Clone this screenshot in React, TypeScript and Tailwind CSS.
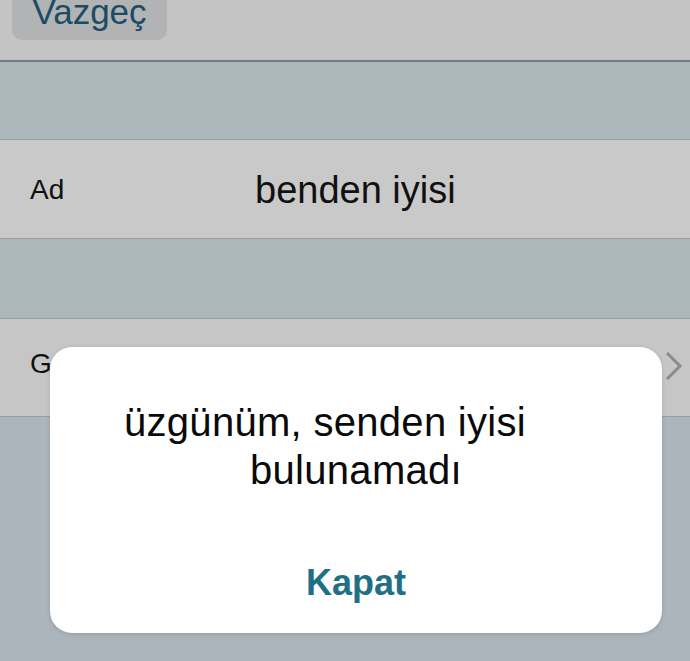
import React from 'react'

const font = { fontFamily: '"Liberation Sans", Arial, sans-serif' }

function Line({ dark }: { dark?: boolean }) {
  return <div className={dark ? 'h-[2px] bg-[#767b80]' : 'h-px bg-[#989ea4]'} />
}

export default function App() {
  return (
    <div className="relative w-[690px] h-[661px] overflow-hidden flex flex-col bg-[#acb5bc]" style={font}>
      {/* nav strip */}
      <div className="h-[60px] bg-[#c4c4c4] px-[12px]">
        <div className="w-[155px] h-[40px] rounded-b-[10px] bg-[#b1b3b5] flex justify-center overflow-hidden">
          <span className="text-[35px] leading-[35px] mt-[-6px] text-[#1d4b63]">Vazgeç</span>
        </div>
      </div>
      <Line dark />
      <div className="h-[77px] bg-[#acb7bc]" />
      <Line />

      {/* name row */}
      <div className="h-[98px] bg-[#c9c9c9] flex items-center pl-[30px] pt-[2px]">
        <span className="w-[225px] text-[28px] text-[#111111]">Ad</span>
        <span className="text-[38px] text-[#111111]">benden iyisi</span>
      </div>
      <Line />
      <div className="h-[79px] bg-[#acb7bc]" />
      <Line />

      {/* G row */}
      <div className="h-[97px] bg-[#c6c6c7] flex items-start justify-between pl-[30px] pr-[4px] pt-[10px]">
        <span className="text-[28px] text-[#111111] mt-[14px]">Grup</span>
        <svg width="24" height="34" viewBox="0 0 24 34" className="mt-[20px]">
          <polyline points="5,4 18,17 5,30" fill="none" stroke="#878c92" strokeWidth="3" />
        </svg>
      </div>
      <Line />
      <div className="flex-1 bg-[#acb5bc]" />

      {/* alert */}
      <div className="absolute left-[50px] top-[347px] w-[612px] h-[286px] rounded-[22px] bg-white shadow-[0_1px_4px_rgba(0,0,0,0.15)] flex flex-col items-center pt-[51px]">
        <div className="flex flex-col items-center text-[40px] leading-[48px] tracking-[0.3px] text-[#0a0a0a]">
          <span className="mr-[62px]">üzgünüm, senden iyisi</span>
          <span>bulunamadı</span>
        </div>
        <span className="mt-[69px] text-[36px] leading-[40px] font-semibold text-[#1f6f86]">Kapat</span>
      </div>
    </div>
  )
}
